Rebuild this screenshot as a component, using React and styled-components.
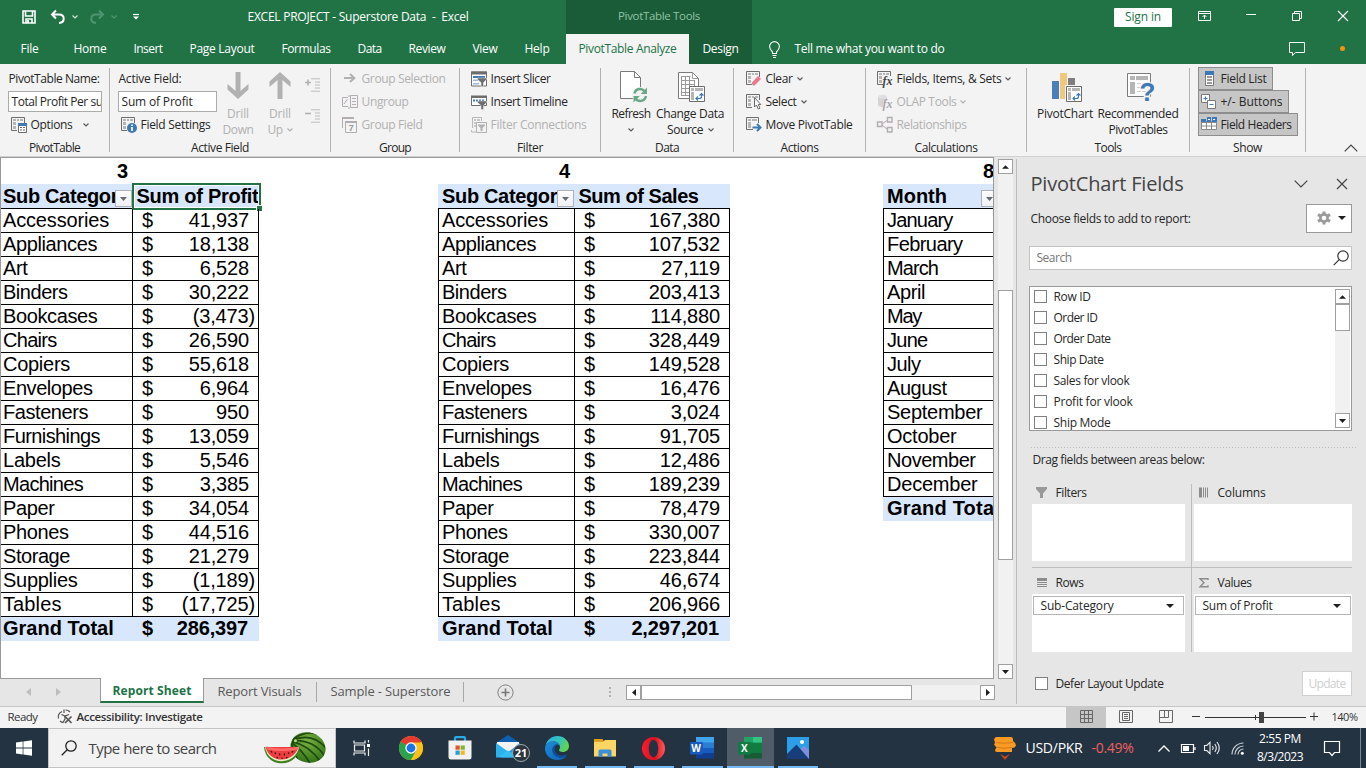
import React, { useLayoutEffect, useRef, useState } from "react";
import styled, { createGlobalStyle, css } from "styled-components";

const Global = createGlobalStyle`
  * { box-sizing: border-box; }
  body { margin: 0; overflow: hidden; }
  svg { display: block; flex: none; overflow: visible; }
`;

const UI = '"Open Sans", "Noto Sans", sans-serif';
const GREEN = "#217346";

/* ---------- text ---------- */

const Txt = styled.span`
  display: inline-block;
  flex: none;
  white-space: pre;
  padding: 0 0.5px;
  font-size: ${(p) => p.$size || 12}px;
  font-weight: ${(p) => p.$weight || 400};
  color: ${(p) => p.$color || "inherit"};
  line-height: 16px;
  margin-left: ${(p) => p.$ml || 0}px;
`;

/* A label whose letter spacing is tuned so that it takes exactly `w` pixels. */
function T({ w, size, weight, color, ml, children }) {
  const ref = useRef(null);
  const [spacing, setSpacing] = useState(0);
  useLayoutEffect(() => {
    const el = ref.current;
    el.style.letterSpacing = "0px";
    const natural = el.getBoundingClientRect().width;
    const next = (w - natural) / el.textContent.length;
    el.style.letterSpacing = `${next}px`;
    setSpacing(next);
  }, [w, children]);
  return (
    <Txt ref={ref} $size={size} $weight={weight} $color={color} $ml={ml} style={{ letterSpacing: spacing }}>
      {children}
    </Txt>
  );
}

/* ---------- frame ---------- */

const Window = styled.div`
  width: 1366px;
  height: 768px;
  display: flex;
  flex-direction: column;
  overflow: hidden;
  background: #e6e6e6;
  color: #262626;
  font-family: ${UI};
`;

const Slot = styled.div`
  display: flex;
  flex: none;
  align-items: center;
  justify-content: ${(p) => (p.$start ? "flex-start" : "center")};
  width: ${(p) => p.$w}px;
  margin-left: ${(p) => p.$ml || 0}px;
`;

const TitleBar = styled.header`
  height: 34px;
  flex: none;
  display: flex;
  align-items: center;
  background: ${GREEN};
  color: #fff;
`;

const QuickAccess = styled.div`
  width: 247px;
  padding-left: 22px;
  display: flex;
  align-items: center;
`;

const ContextTitle = styled.div`
  width: 186px;
  height: 34px;
  margin-left: 97px;
  padding-bottom: 2px;
  display: flex;
  align-items: center;
  justify-content: center;
  background: #1a5c38;
  color: #8fc3a4;
`;

const SignIn = styled.button`
  width: 58px;
  height: 19px;
  margin-left: 362px;
  padding: 0;
  border: 0;
  border-radius: 1px;
  background: #fff;
  color: ${GREEN};
  font-family: inherit;
  display: flex;
  align-items: center;
  justify-content: center;
`;

const TabBar = styled.nav`
  height: 30px;
  flex: none;
  display: flex;
  align-items: center;
  background: ${GREEN};
  color: #fff;
`;

const PlainTabs = styled.div`
  width: 566px;
  padding-left: 20px;
  display: flex;
  gap: 26px;
`;

const ActiveTab = styled.div`
  width: 123px;
  height: 30px;
  display: flex;
  align-items: center;
  justify-content: center;
  background: #f3f3f3;
  color: ${GREEN};
`;

const ContextTab = styled.div`
  width: 63px;
  height: 30px;
  display: flex;
  align-items: center;
  justify-content: center;
  background: #1a5c38;
`;

/* ---------- ribbon ---------- */

const Ribbon = styled.section`
  height: 93px;
  flex: none;
  display: flex;
  background: #f3f3f3;
  border-bottom: 1px solid #d2d2d2;
`;

const Group = styled.div`
  width: ${(p) => p.$w}px;
  height: 92px;
  flex: none;
  display: flex;
  flex-direction: column;
  padding-top: 3px;
  background: linear-gradient(#b1b1b1, #b1b1b1) right 4px / 1px 84px no-repeat;
`;

const GroupBody = styled.div`
  height: 71px;
  flex: none;
  display: flex;
`;

const Caption = styled.div`
  height: 18px;
  padding-top: 2px;
  padding-right: 1px;
  display: flex;
  justify-content: center;
  align-items: center;
`;

const Stack = styled.div`
  width: ${(p) => p.$w || "auto"};
  margin-left: ${(p) => p.$ml || 0}px;
  flex: none;
  display: flex;
  flex-direction: column;
`;

const ExpandStack = styled.div`
  display: flex;
  flex-direction: column;
  gap: 15px;
  padding-top: 11px;
  margin-left: 4px;
`;

const Row = styled.div`
  height: 23px;
  display: flex;
  align-items: center;
  padding-left: ${(p) => p.$pl || 0}px;
  color: ${(p) => (p.$off ? "#b1b1b1" : "#262626")};
`;

const Field = styled.div`
  width: ${(p) => p.$w}px;
  height: 21px;
  margin: 1px 0;
  padding-left: 2px;
  overflow: hidden;
  display: flex;
  align-items: center;
  border: 1px solid #ababab;
  background: #fff;
`;

const Big = styled.div`
  width: ${(p) => p.$w}px;
  margin-left: ${(p) => p.$ml || 0}px;
  flex: none;
  display: flex;
  flex-direction: column;
  align-items: center;
  color: ${(p) => (p.$off ? "#b1b1b1" : "#262626")};
`;

const BigIcon = styled.div`
  height: 38.5px;
  padding-top: ${(p) => p.$pt || 4}px;
  padding-left: ${(p) => p.$pl || 0}px;
`;

const BigLine = styled.div`
  height: 16px;
  display: flex;
  align-items: center;
  gap: 4px;
`;

const Toggle = styled.div`
  width: ${(p) => p.$w}px;
  height: 23px;
  padding-left: 2px;
  display: flex;
  align-items: center;
  border: 1px solid #8d8d8d;
  background: #c6c6c6;
`;

const Chev = ({ c = "#5a5a5a" }) => (
  <svg width="6" height="4" viewBox="0 0 6 4">
    <path d="M.5 .5L3 3L5.500 .5" fill="none" stroke={c} strokeWidth="1.2" />
  </svg>
);

const Ico = ({ children, w = 16, h = 16 }) => (
  <svg width={w} height={h} viewBox={`0 0 ${w} ${h}`} fill="none">
    {children}
  </svg>
);

const PivotBase = ({ c = "#6d6d6d", f = "#b5b5b5" }) => (
  <g>
    <path d="M6 13.500H.5V.5H13.500V6" stroke={c} fill="none" />
    <path d="M2 2h3v2H2zM6 2h2v2H6zM9 2h3v2H9zM2 5h3v3H2zM2 9h3v3H2z" fill={f} />
  </g>
);

const IcoOptions = () => (
  <Ico>
    <PivotBase />
    <path d="M7.500 7.500h8v8h-8z" fill="#fff" stroke="#6d6d6d" />
    <path d="M7 6h9v3H7z" fill="#3e78b5" />
    <path d="M9 10.500h2M12 10.500h2M9 13h2M12 13h2" stroke="#6d6d6d" />
  </Ico>
);
const IcoSettings = () => (
  <Ico>
    <PivotBase />
    <circle cx="11" cy="11" r="5" fill="#3e78b5" />
    <path d="M11 7.500v1.600M11 10v4" stroke="#fff" strokeWidth="1.700" />
  </Ico>
);
const IcoExpand = ({ minus }) => (
  <Ico>
    <path d={minus ? "M0 4.500h6" : "M0 4.500h6M3 1.500v6"} stroke="#b1b1b1" strokeWidth="1.600" />
    <path d="M6 .8h9M10 4h5M10 7h5M10 10h5M6 13.200h9" stroke="#bdbdbd" />
  </Ico>
);
const IcoGroupSel = () => (
  <Ico>
    <path d="M2 7h10M8 3l4.300 4L8 11" stroke="#b1b1b1" strokeWidth="2" />
  </Ico>
);
const IcoUngroup = () => (
  <Ico>
    <path d="M6 12.500H.5v-9H6M2 10L5.500 5M8.500 1.500h7v12h-7zM6 2h2M6 14h2" stroke="#b1adb1" />
    <path d="M10 4.500h4M10 7.500h4M10 10.500h4" stroke="#b1adb1" />
  </Ico>
);
const SevenText = styled.text`
  font: 700 9.500px "Liberation Sans", sans-serif;
`;
const IcoGroupField = () => (
  <Ico>
    <path d="M.5 11V.5h11" stroke="#b1adb1" />
    <path d="M0 0h12v2H0z" fill="#b1adb1" />
    <path d="M3.500 4.500h11v11h-11z" fill="#f3f3f3" stroke="#b1adb1" />
    <path d="M3 4h12v2H3z" fill="#b1adb1" />
    <SevenText x="6.500" y="14" fill="#a09aa0">7</SevenText>
  </Ico>
);
const Funnel = ({ c = "#6d6d6d" }) => <path d="M6.500 7h9v1.500L12.500 11.500v4H10v-4L6.500 8.500z" fill={c} stroke="#f3f3f3" strokeWidth=".5" />;
const IcoSlicer = () => (
  <Ico>
    <path d="M.5 1h15v14H.5z" fill="#fff" stroke="#6d6d6d" />
    <path d="M0 .5h16v3H0z" fill="#6d6d6d" />
    <path d="M2 5h12v2H2z" fill="#3e78b5" />
    <path d="M2 8.500h5v1.500H2zM2 12h6v1.500H2z" fill="#9db9d8" />
    <Funnel />
  </Ico>
);
const IcoTimeline = () => (
  <Ico>
    <path d="M.5 3h15v8.500H.5z" fill="#fff" stroke="#6d6d6d" />
    <path d="M0 1.500h16V4H0z" fill="#6d6d6d" />
    <path d="M2 6.500h12" stroke="#3e78b5" strokeWidth="2" strokeDasharray="2 1" />
    <Funnel />
  </Ico>
);
const IcoConn = () => (
  <Ico>
    <path d="M1.500 11V.5h9V4M.5 13v2H5" stroke="#b8b8b8" />
    <path d="M3 2h2v2H3zM6 2h3v2H6zM3 5h2v2H3zM3 8h2v2H3z" fill="#c6c6c6" />
    <path d="M5.500 5.500h10v10h-10z" fill="#f3f3f3" stroke="#b1b1b1" />
    <path d="M7 7.500h7v1L11.500 11v3h-2v-3L7 8.500z" fill="#b1b1b1" />
  </Ico>
);
const IcoClear = () => (
  <Ico>
    <PivotBase />
    <path d="M4.500 11.500l6-7L15.500 8 9 15H7z" fill="#f3f3f3" />
    <path d="M5.500 12L12 5l3 3-6.500 6.500H7z" fill="#e8798e" />
  </Ico>
);
const IcoSelect = () => (
  <Ico>
    <PivotBase />
    <path d="M8.500 3.500v9.500l2-2 1.800 4 1.700-.8-1.700-3.700h2.500z" fill="#fff" stroke="#5a5a5a" strokeWidth=".9" />
  </Ico>
);
const IcoMove = () => (
  <Ico>
    <path d="M7 12.500H.5V.5H12.500V6" stroke="#6d6d6d" />
    <path d="M2 2h3v2H2zM6 2h5v2H6zM2 5h3v6H2z" fill="#b5b5b5" />
    <path d="M6.500 10.500h7M11 7l3.500 3.500L11 14" stroke="#3e78b5" strokeWidth="2" />
  </Ico>
);
const FxText = styled.text`
  font: italic 700 12px "Liberation Serif", serif;
`;
const IcoFx = () => (
  <Ico>
    <PivotBase />
    <path d="M6 5h10v9.500H6z" fill="#f3f3f3" />
    <FxText x="5.500" y="13.500" fill="#444">fx</FxText>
  </Ico>
);
const IcoOlap = () => (
  <Ico>
    <path d="M1 3v8c0 1.300 2 2 4.500 2H6V7h4V3z" fill="#d6d2d6" />
    <ellipse cx="5.500" cy="2.800" rx="4.500" ry="2" fill="#e2dfe2" />
    <FxText x="5.500" y="14" fill="#aaa5aa">fx</FxText>
  </Ico>
);
const IcoRel = () => (
  <Ico>
    <path d="M.5 5h4.500v4.500H.5zM10.500 .5H15V5h-4.500zM10.500 10.500H15V15h-4.500z" stroke="#b1adb1" strokeWidth="1.400" />
    <path d="M5 7l5-3.500M5 8l5 4" stroke="#b1adb1" />
  </Ico>
);
const MiniPivot = ({ x, y }) => (
  <g transform={`translate(${x} ${y})`}>
    <path d="M.5 .5h15v15H.5z" fill="#fff" stroke="#6d6d6d" />
    <path d="M2 2h3v3H2zM6 2h8v3H6zM2 6h3v8H2z" fill="#b5b5b5" />
    <path d="M7 12.500h3.500c1.500 0 2-1 2-2V8M9 10.500l-2 2 2 2M10.500 9.500l2-2 2 2" stroke="#3e78b5" strokeWidth="1.200" fill="none" />
  </g>
);
const IcoRefresh = () => (
  <Ico w={28} h={32}>
    <path d="M.5 .5h14l6 6v21H.5z" fill="#fff" stroke="#7a7a7a" />
    <path d="M14.500 .5v6h6" stroke="#7a7a7a" />
    <circle cx="20" cy="24" r="8" fill="#f3f3f3" />
    <path d="M14.500 22.500c.7-3 3-4.500 5.500-4.500 2 0 3.500 .8 4.700 2.300M26 25c-.7 3-3 5-5.800 5-2 0-3.700-.9-4.800-2.500" stroke="#6ba889" strokeWidth="2.500" />
    <path d="M27 16.500v6.500h-6.300zM13.500 31.500V25h6.300z" fill="#6ba889" />
  </Ico>
);
const IcoSource = () => (
  <Ico w={28} h={32}>
    <path d="M.5 1.500h14l6 6v20H.5z" fill="#fff" stroke="#7a7a7a" />
    <path d="M14.500 1.500v6h6M3.500 5.500h9M3.500 9.500h13M3.500 13.500h13M3.500 17.500h8M3.500 21.500h8M3.500 24.500h8M3.500 5v20M7.500 5v20M11.500 5v20M16.500 9v6" stroke="#9a9a9a" />
    <MiniPivot x={11} y={15} />
  </Ico>
);
const IcoPivotChart = () => (
  <Ico w={30} h={30}>
    <path d="M0 8h7v18H0z" fill="#4a7fb8" />
    <path d="M8 0h7v26H8z" fill="#efc77d" />
    <path d="M16 5h7v8h-7z" fill="#7f7f7f" />
    <path d="M13 12h17v17H13z" fill="#f3f3f3" />
    <MiniPivot x={14} y={13} />
  </Ico>
);
const QMark = styled.text`
  font: 700 26px "Liberation Sans", sans-serif;
`;
const IcoRecommended = () => (
  <Ico w={28} h={30}>
    <path d="M.5 .5h23v23H.5z" fill="#fff" stroke="#7a7a7a" />
    <path d="M3 3h5v4H3zM9 3h12v4H9zM3 9h5v12H3z" fill="#b5b5b5" />
    <path d="M10 10.500h11M10 14.500h11M10 18.500h11" stroke="#cfcfcf" strokeDasharray="4 1" />
    <QMark x="12.500" y="28" fill="#3e78b5" stroke="#f3f3f3" strokeWidth="2.500" paintOrder="stroke">?</QMark>
  </Ico>
);
const IcoFieldList = () => (
  <Ico w={9} h={16}>
    <path d="M.5 .5h8v14h-8z" fill="#fff" stroke="#7a7a7a" />
    <path d="M0 0h9v4H0z" fill="#3e78b5" />
    <path d="M2 6h5M2 9h5M2 12h5" stroke="#7a7a7a" strokeWidth="1.400" />
  </Ico>
);
const IcoPlusMinus = () => (
  <Ico>
    <path d="M.5 .5h8v8h-8z" fill="#fff" stroke="#7a7a7a" />
    <path d="M2.500 4.500h4M4.500 2.500v4" stroke="#3e78b5" />
    <path d="M6.500 6.500h8v8h-8z" fill="#fff" stroke="#7a7a7a" />
    <path d="M8.500 10.500h4" stroke="#3e78b5" />
  </Ico>
);
const IcoHeaders = () => (
  <Ico>
    <path d="M.5 4.500h15v8H.5z" fill="#fff" stroke="#8a8a8a" />
    <path d="M0 2h5v3H0zM6 0h4v5H6zM11 0h5v5h-5z" fill="#3e78b5" />
    <path d="M.5 5.500h15M0 9h16M5.500 5v8M10.500 5v8" stroke="#8a8a8a" />
    <path d="M7 2.500h2M12 2.500h2" stroke="#fff" />
  </Ico>
);
const DrillArrow = ({ up }) => (
  <Ico w={22} h={27}>
    <g transform={up ? "rotate(180 11 13.500)" : undefined}>
      <path d="M11 0v22" stroke="#b1b1b1" strokeWidth="5" />
      <path d="M.5 12v5.500L11 27l10.500-9.500V12L11 21z" fill="#b1b1b1" />
    </g>
  </Ico>
);

function Cmd({ icon, w, label, off, chev, pl = 0 }) {
  return (
    <Row $off={off} $pl={pl}>
      <Slot $w={19} $start>{icon}</Slot>
      <T w={w}>{label}</T>
      {chev ? <Slot $w={6} $ml={chev}><Chev c={off ? "#b1b1b1" : undefined} /></Slot> : null}
    </Row>
  );
}

function RibbonArea() {
  return (
    <Ribbon>
      <Group $w={110}>
        <GroupBody>
          <Stack $ml={8}>
            <Row><T w={92}>PivotTable Name:</T></Row>
            <Field $w={94}><T w={99}>Total Profit Per sub</T></Field>
            <Cmd pl={3} icon={<IcoOptions />} w={43} label="Options" chev={10} />
          </Stack>
        </GroupBody>
        <Caption><T w={52}>PivotTable</T></Caption>
      </Group>
      <Group $w={221}>
        <GroupBody>
          <Stack $ml={8} $w="99px">
            <Row><T w={64}>Active Field:</T></Row>
            <Field $w={99}><T w={72}>Sum of Profit</T></Field>
            <Cmd pl={3} icon={<IcoSettings />} w={71} label="Field Settings" />
          </Stack>
          <Big $w={40} $ml={1} $off>
            <BigIcon $pt={5}><DrillArrow /></BigIcon>
            <BigLine><T w={23}>Drill</T></BigLine>
            <BigLine><T w={32}>Down</T></BigLine>
          </Big>
          <Big $w={42} $ml={1} $off>
            <BigIcon $pt={5}><DrillArrow up /></BigIcon>
            <BigLine><T w={23}>Drill</T></BigLine>
            <BigLine><T w={16}>Up</T><Chev c="#b1b1b1" /></BigLine>
          </Big>
          <ExpandStack>
            <IcoExpand />
            <IcoExpand minus />
          </ExpandStack>
        </GroupBody>
        <Caption><T w={59}>Active Field</T></Caption>
      </Group>
      <Group $w={129}>
        <GroupBody>
          <Stack $ml={11}>
            <Cmd off icon={<IcoGroupSel />} w={85} label="Group Selection" />
            <Cmd off icon={<IcoUngroup />} w={48} label="Ungroup" />
            <Cmd off icon={<IcoGroupField />} w={62} label="Group Field" />
          </Stack>
        </GroupBody>
        <Caption><T w={33}>Group</T></Caption>
      </Group>
      <Group $w={141}>
        <GroupBody>
          <Stack $ml={11}>
            <Cmd icon={<IcoSlicer />} w={61} label="Insert Slicer" />
            <Cmd icon={<IcoTimeline />} w={78} label="Insert Timeline" />
            <Cmd off icon={<IcoConn />} w={97} label="Filter Connections" />
          </Stack>
        </GroupBody>
        <Caption><T w={27}>Filter</T></Caption>
      </Group>
      <Group $w={133}>
        <GroupBody>
          <Big $w={42} $ml={9}>
            <BigIcon $pl={6}><IcoRefresh /></BigIcon>
            <BigLine><T w={40}>Refresh</T></BigLine>
            <BigLine><Chev /></BigLine>
          </Big>
          <Big $w={72} $ml={2}>
            <BigIcon $pl={4}><IcoSource /></BigIcon>
            <BigLine><T w={69}>Change Data</T></BigLine>
            <BigLine><T w={37}>Source</T><Chev /></BigLine>
          </Big>
        </GroupBody>
        <Caption><T w={25}>Data</T></Caption>
      </Group>
      <Group $w={132}>
        <GroupBody>
          <Stack $ml={12}>
            <Cmd icon={<IcoClear />} w={28} label="Clear" chev={4} />
            <Cmd icon={<IcoSelect />} w={32} label="Select" chev={4} />
            <Cmd icon={<IcoMove />} w={88} label="Move PivotTable" />
          </Stack>
        </GroupBody>
        <Caption><T w={39}>Actions</T></Caption>
      </Group>
      <Group $w={161}>
        <GroupBody>
          <Stack $ml={11}>
            <Cmd icon={<IcoFx />} w={106} label="Fields, Items, & Sets" chev={3} />
            <Cmd off icon={<IcoOlap />} w={61} label="OLAP Tools" chev={3} />
            <Cmd off icon={<IcoRel />} w={71} label="Relationships" />
          </Stack>
        </GroupBody>
        <Caption><T w={64}>Calculations</T></Caption>
      </Group>
      <Group $w={163}>
        <GroupBody>
          <Big $w={58} $ml={9}>
            <BigIcon $pt={6} $pl={3}><IcoPivotChart /></BigIcon>
            <BigLine><T w={57}>PivotChart</T></BigLine>
          </Big>
          <Big $w={84} $ml={2}>
            <BigIcon $pt={6} $pl={5}><IcoRecommended /></BigIcon>
            <BigLine><T w={82}>Recommended</T></BigLine>
            <BigLine><T w={60}>PivotTables</T></BigLine>
          </Big>
        </GroupBody>
        <Caption><T w={28}>Tools</T></Caption>
      </Group>
      <Group $w={116}>
        <GroupBody>
          <Stack $ml={8}>
            <Toggle $w={75}><Slot $w={16}><IcoFieldList /></Slot><T ml={3} w={47}>Field List</T></Toggle>
            <Toggle $w={91}><Slot $w={16}><IcoPlusMinus /></Slot><T ml={3} w={63}>+/- Buttons</T></Toggle>
            <Toggle $w={100}><Slot $w={16}><IcoHeaders /></Slot><T ml={3} w={72}>Field Headers</T></Toggle>
          </Stack>
        </GroupBody>
        <Caption><T w={30}>Show</T></Caption>
      </Group>
      <Collapse>
        <svg width="14" height="8" viewBox="0 0 14 8"><path d="M.7 7.300L7 1l6.300 6.300" fill="none" stroke="#444" strokeWidth="1.200" /></svg>
      </Collapse>
    </Ribbon>
  );
}

const Collapse = styled.div`
  flex: 1;
  display: flex;
  align-items: flex-end;
  justify-content: flex-end;
  padding: 0 8px 4px 0;
`;

/* ---------- worksheet ---------- */

const Work = styled.main`
  height: 549px;
  flex: none;
  display: flex;
`;

const Left = styled.div`
  width: 1016px;
  display: flex;
  flex-direction: column;
`;

const GridRow = styled.div`
  height: 522px;
  display: flex;
`;

const Sheet = styled.div`
  width: 994px;
  height: 522px;
  overflow: hidden;
  display: flex;
  background: #fff;
  border: 1px solid #999;
  color: #000;
  font-family: "Liberation Sans", Arial, sans-serif;
`;

const Pivot = styled.div`
  flex: none;
  width: ${(p) => p.$w}px;
  margin-left: ${(p) => p.$ml || 0}px;
`;

const line = "1px solid #000";

const Line = styled.div`
  display: flex;
  height: ${(p) => (p.$head ? 25 : 24)}px;
  line-height: ${(p) => (p.$head ? 25 : 23)}px;
  font-size: 20px;
  font-weight: ${(p) => (p.$bold ? 700 : 400)};
  background: ${(p) => (p.$bold ? "#d9e7fd" : "transparent")};
  border-bottom: ${(p) => (p.$total ? "0" : line)};
`;

const Num = styled.div`
  width: ${(p) => p.$w}px;
  height: 26px;
  padding: 0 4px 0 0;
  line-height: 27px;
  text-align: right;
  font-size: 20px;
  font-weight: 700;
`;

const Name = styled.div`
  position: relative;
  flex: none;
  width: ${(p) => p.$w}px;
  overflow: hidden;
  white-space: nowrap;
  padding-left: ${(p) => p.$pl}px;
  ${(p) => p.$left && css`border-left: ${line};`}
  ${(p) => p.$right && css`border-right: ${line};`}
`;

const Amount = styled.div`
  position: relative;
  flex: 1;
  display: flex;
  justify-content: space-between;
  padding: 0 ${(p) => (p.$neg ? 3 : p.$right ? 9 : 11)}px 0 9px;
  letter-spacing: -0.15px;
  ${(p) => p.$right && css`border-right: ${line};`}
`;

const HeadText = styled.div`
  position: relative;
  flex: 1;
  padding-left: 3px;
  white-space: nowrap;
`;

const FilterBtn = styled.div`
  position: absolute;
  right: ${(p) => p.$r || 0}px;
  top: 6px;
  width: 17px;
  height: 17px;
  display: flex;
  align-items: center;
  justify-content: center;
  border: 1px solid #aeb2b8;
  background: linear-gradient(#fdfdfe, #eef0f4);
`;

const Selection = styled.div`
  position: absolute;
  left: -1px;
  top: -1px;
  width: 129px;
  height: 27px;
  border: 2px solid ${GREEN};
  box-shadow: inset 0 0 0 1px #fff;
  &::after {
    content: "";
    position: absolute;
    right: -3px;
    bottom: -3px;
    width: 5px;
    height: 5px;
    background: ${GREEN};
    box-shadow: 0 0 0 1px #fff;
  }
`;

const Down = ({ c = "#1f1f1f", w = 7, h = 4 }) => (
  <svg width={w} height={h} viewBox="0 0 8 4" preserveAspectRatio="none"><path d="M0 0h8L4 4z" fill={c} /></svg>
);
const Up = () => <svg width="7" height="4" viewBox="0 0 8 4"><path d="M0 4h8L4 0z" fill="#1f1f1f" /></svg>;

const names = [["Accessories", 107], ["Appliances", 95], ["Art", 25.5], ["Binders", 65.5], ["Bookcases", 95.500], ["Chairs", 54.5], ["Copiers", 68], ["Envelopes", 90.5], ["Fasteners", 86], ["Furnishings", 98], ["Labels", 58.5], ["Machines", 81], ["Paper", 52.5], ["Phones", 66.5], ["Storage", 68], ["Supplies", 75.5], ["Tables", 59.5]];
const profit = ["41,937", "18,138", "6,528", "30,222", "(3,473)", "26,590", "55,618", "6,964", "950", "13,059", "5,546", "3,385", "34,054", "44,516", "21,279", "(1,189)", "(17,725)"];
const sales = ["167,380", "107,532", "27,119", "203,413", "114,880", "328,449", "149,528", "16,476", "3,024", "91,705", "12,486", "189,239", "78,479", "330,007", "223,844", "46,674", "206,966"];
const months = [["January", 66.5], ["February", 76.5], ["March", 52], ["April", 39], ["May", 35], ["June", 41.5], ["July", 34.5], ["August", 60.5], ["September", 96.5], ["October", 70.5], ["November", 89.5], ["December", 91.5]];

function PivotTable({ no, w, ml, col, left, head, headW, values, total, selected }) {
  const pl = left ? 3 : 2;
  return (
    <Pivot $w={w} $ml={ml}>
      <Num $w={col - 1}>{no}</Num>
      <Line $head $bold>
        <Name $w={col} $pl={left ? 3.5 : 1.5}>
          <T size={20} weight={700} w={127}>Sub Category</T>
          <FilterBtn $r={1}><Down c="#666b73" /></FilterBtn>
        </Name>
        <HeadText>
          <T size={20} weight={700} w={headW}>{head}</T>
          {selected && <Selection />}
        </HeadText>
      </Line>
      {names.map(([n, nw], i) => (
        <Line key={n}>
          <Name $w={col} $pl={pl - 0.5} $left={left} $right><T size={20} w={nw}>{n}</T></Name>
          <Amount $right $neg={values[i][0] === "("}><span>$</span><span>{values[i]}</span></Amount>
        </Line>
      ))}
      <Line $bold $total>
        <Name $w={col} $pl={left ? 4 : 2}>Grand Total</Name>
        <Amount><span>$</span><span>{total}</span></Amount>
      </Line>
    </Pivot>
  );
}

function MonthTable() {
  return (
    <Pivot $w={116} $ml={153}>
      <Num $w={115}>8</Num>
      <Line $head $bold>
        <Name $w={116} $pl={4}>Month<FilterBtn $r={1}><Down c="#666b73" /></FilterBtn></Name>
      </Line>
      {months.map(([m, mw]) => <Line key={m}><Name $w={116} $pl={2.5} $left><T size={20} w={mw}>{m}</T></Name></Line>)}
      <Line $bold $total><Name $w={116} $pl={3.5}><T size={20} weight={700} w={114}>Grand Total</T></Name></Line>
    </Pivot>
  );
}

/* ---------- scroll bars ---------- */

const VScroll = styled.div`
  width: 15px;
  height: ${(p) => p.$h}px;
  margin: ${(p) => p.$m};
  flex: none;
  display: flex;
  flex-direction: column;
  background: #f1f1f1;
`;
const HScroll = styled.div`
  width: 369px;
  height: 15px;
  display: flex;
  background: #f1f1f1;
`;
const ScrollBtn = styled.div`
  width: 15px;
  height: 15px;
  flex: none;
  display: flex;
  align-items: center;
  justify-content: center;
  border: 1px solid #a0a0a0;
  background: #fff;
`;
const Thumb = styled.div`
  width: ${(p) => p.$w || 15}px;
  height: ${(p) => p.$h || 15}px;
  margin-top: ${(p) => p.$mt || 0}px;
  border: 1px solid #a0a0a0;
  background: #fff;
`;
const Fill = styled.div`
  flex: 1;
`;

/* ---------- sheet tabs ---------- */

const SheetTabs = styled.div`
  height: 27px;
  padding-bottom: 1px;
  display: flex;
  align-items: center;
  color: #595959;
`;
const ActiveSheet = styled.div`
  width: 104px;
  height: 25px;
  margin-top: -3px;
  padding-top: 3px;
  align-self: flex-start;
  position: relative;
  top: 2px;
  display: flex;
  align-items: center;
  justify-content: center;
  background: #fff;
  border: 1px solid #999;
  border-top: 0;
  border-bottom: 2px solid ${GREEN};
  color: ${GREEN};
`;
const SheetLabel = styled.div`
  padding-bottom: 2px;
  margin-left: 13px;
  display: flex;
`;
const Divider = styled.div`
  width: 1px;
  height: 20px;
  margin: 0 0 0 ${(p) => p.$ml}px;
  background: #a8a8a8;
`;

/* ---------- fields pane ---------- */

const Pane = styled.aside`
  width: 350px;
  height: 545px;
  margin-top: 2px;
  padding-left: 12px;
  display: flex;
  flex-direction: column;
  align-items: flex-start;
  border-left: 1px solid #bebebe;
`;
const PaneTitle = styled.div`
  height: 45px;
  padding: 4px 0 0 1px;
  flex: none;
  display: flex;
  align-items: center;
`;
const PaneLine = styled.div`
  width: 323px;
  height: 29px;
  flex: none;
  display: flex;
  align-items: center;
  justify-content: space-between;
`;
const GearBtn = styled.div`
  width: 46px;
  height: 29px;
  padding: 0 5px 2px 10px;
  display: flex;
  align-items: center;
  justify-content: space-between;
  border: 1px solid #999;
  background: #fff;
`;
const Search = styled.div`
  width: 323px;
  height: 24px;
  margin-top: 13px;
  padding: 0 2px 1px 6px;
  flex: none;
  display: flex;
  align-items: center;
  justify-content: space-between;
  border: 1px solid #c3c3c3;
  background: #fff;
  color: #777;
`;
const List = styled.div`
  width: 323px;
  height: 145px;
  margin-top: 16px;
  flex: none;
  display: flex;
  justify-content: space-between;
  overflow: hidden;
  border: 1px solid #999;
  background: #fff;
`;
const Items = styled.div`
  margin-top: -1px;
`;
const ListItem = styled.div`
  height: 21px;
  padding-left: 4px;
  display: flex;
  align-items: center;
`;
const Check = styled.div`
  width: 13px;
  height: 13px;
  margin-right: ${(p) => p.$mr || 6}px;
  border: 1px solid #808080;
  background: #fff;
`;
const Dots = styled.div`
  width: 326px;
  height: 1px;
  flex: none;
  margin: 16px 0 4px 2px;
  background: repeating-linear-gradient(90deg, #bdbdbd 0 1px, transparent 1px 3px);
`;
const Areas = styled.div`
  width: 320px;
  margin: 16px 0 0 3px;
  display: grid;
  grid-template-columns: 159px 1px 160px;
  grid-template-rows: 83px 1px 84px;
  background:
    linear-gradient(#bebebe, #bebebe) 159px 0 / 1px 100% no-repeat,
    linear-gradient(#bebebe, #bebebe) 0 83px / 100% 1px no-repeat;
`;
const Area = styled.div`
  grid-column: ${(p) => p.$c};
  grid-row: ${(p) => p.$r};
  padding-left: ${(p) => (p.$c === 3 ? 2 : 0)}px;
`;
const AreaHead = styled.div`
  height: ${(p) => p.$h}px;
  padding: ${(p) => (p.$h === 20 ? 0 : 5)}px 0 ${(p) => (p.$h === 20 ? 3 : 2)}px 4px;
  display: flex;
  align-items: center;
`;
const AreaBox = styled.div`
  width: ${(p) => p.$w}px;
  height: ${(p) => p.$h}px;
  padding: 2px 1px;
  background: #fff;
`;
const Chip = styled.div`
  height: 19px;
  padding: 0 9px 0 6px;
  display: flex;
  align-items: center;
  justify-content: space-between;
  border: 1px solid #b5b5b5;
`;
const PaneFooter = styled.div`
  width: 323px;
  margin-top: 19px;
  padding-left: 6px;
  display: flex;
  align-items: center;
`;
const UpdateBtn = styled.div`
  width: 50px;
  height: 25px;
  margin-left: auto;
  display: flex;
  align-items: center;
  justify-content: center;
  border: 1px solid #d0d0d0;
  background: #fff;
  color: #cfcfcf;
`;

const fields = [["Row ID", 38], ["Order ID", 45], ["Order Date", 58], ["Ship Date", 51], ["Sales for vlook", 77], ["Profit for vlook", 80], ["Ship Mode", 58]];

const Gear = () => (
  <svg width="14" height="14" viewBox="0 0 14 14">
    <circle cx="7" cy="7" r="3.600" fill="none" stroke="#9a9a9a" strokeWidth="2.600" />
    <path d="M5.500 .5h3V3h-3zM5.500 11h3v2.500h-3zM1.700 2.300l2.500 1.400-1.500 2.600L.2 4.900zM12.300 2.300L9.800 3.700l1.500 2.600 2.500-1.400zM.2 9.100l2.500-1.400 1.500 2.600-2.500 1.400zM13.800 9.100l-2.500-1.400-1.500 2.600 2.500 1.400z" fill="#9a9a9a" />
  </svg>
);

const Mag = ({ size = 16, c = "#333", sw = 1.2 }) => (
  <svg width={size} height={size} viewBox="0 0 16 16">
    <circle cx="10" cy="6" r="5.200" fill="none" stroke={c} strokeWidth={sw} />
    <path d="M6.200 9.700L.7 15.200" stroke={c} strokeWidth={sw} />
  </svg>
);

function FieldsPane() {
  return (
    <Pane>
      <PaneTitle>
        <T size={20} w={154} color="#444">PivotChart Fields</T>
        <Slot $w={14} $ml={110}>
          <svg width="14" height="8" viewBox="0 0 14 8"><path d="M.7 .7L7 7L13.300 .7" fill="none" stroke="#444" strokeWidth="1.200" /></svg>
        </Slot>
        <Slot $w={10} $ml={29}>
          <svg width="10" height="10" viewBox="0 0 10 10"><path d="M0 0l10 10M10 0L0 10" stroke="#444" strokeWidth="1.200" /></svg>
        </Slot>
      </PaneTitle>
      <PaneLine>
        <T ml={1} w={161}>Choose fields to add to report:</T>
        <GearBtn><Gear /><Down w={8} /></GearBtn>
      </PaneLine>
      <Search><T w={36}>Search</T><Mag /></Search>
      <List>
        <Items>
          {fields.map(([f, w]) => <ListItem key={f}><Check /><T w={w}>{f}</T></ListItem>)}
        </Items>
        <VScroll $h={139} $m="2px 1px 0 0">
          <ScrollBtn><Up /></ScrollBtn>
          <Thumb $h={27} />
          <Fill />
          <ScrollBtn><Down /></ScrollBtn>
        </VScroll>
      </List>
      <Dots />
      <T ml={3} w={173}>Drag fields between areas below:</T>
      <Areas>
        <Area $c={1} $r={1}>
          <AreaHead $h={20}>
            <Slot $w={19} $start><Ico w={11} h={12}><path d="M0 0h11v2L7 6.500V11H4V6.500L0 2z" fill="#999" /></Ico></Slot>
            <T w={32}>Filters</T>
          </AreaHead>
          <AreaBox $w={153} $h={57} />
        </Area>
        <Area $c={3} $r={1}>
          <AreaHead $h={20}>
            <Slot $w={19} $start><Ico w={11} h={11}><path d="M1 .5h3v10H1zM5 .5h1v10H5zM7 .5h1v10H7zM9 .5h1v10H9z" fill="#8c8c8c" /></Ico></Slot>
            <T w={49}>Columns</T>
          </AreaHead>
          <AreaBox $w={158} $h={57} />
        </Area>
        <Area $c={1} $r={3}>
          <AreaHead $h={26}>
            <Slot $w={19} $start><Ico w={11} h={10}><path d="M1 0h10v3H1zM1 4h10v1H1zM1 6h10v1H1zM1 8h10v1H1z" fill="#8c8c8c" /></Ico></Slot>
            <T w={29}>Rows</T>
          </AreaHead>
          <AreaBox $w={153} $h={58}><Chip><T w={74}>Sub-Category</T><Down w={8} /></Chip></AreaBox>
        </Area>
        <Area $c={3} $r={3}>
          <AreaHead $h={26}>
            <Slot $w={19} $start><Ico w={11} h={10}><path d="M10 2V.7H2l4 4-4 4h8V7.300" stroke="#8c8c8c" strokeWidth="1.400" /></Ico></Slot>
            <T w={35}>Values</T>
          </AreaHead>
          <AreaBox $w={158} $h={58}><Chip><T w={71}>Sum of Profit</T><Down w={8} /></Chip></AreaBox>
        </Area>
      </Areas>
      <PaneFooter>
        <Check $mr={7} /><T w={109}>Defer Layout Update</T>
        <UpdateBtn><T w={38}>Update</T></UpdateBtn>
      </PaneFooter>
    </Pane>
  );
}

/* ---------- status bar ---------- */

const Status = styled.footer`
  height: 22px;
  flex: none;
  padding: 0 0 1px 7px;
  display: flex;
  align-items: center;
  background: #f3f3f3;
  border-top: 1px solid #c6c6c6;
  color: #333;
`;
const ViewBtn = styled.div`
  width: 40px;
  height: 21px;
  margin-bottom: -1px;
  padding-bottom: 2px;
  display: flex;
  align-items: center;
  justify-content: center;
  background: ${(p) => (p.$on ? "#c6c6c6" : "transparent")};
`;

function StatusBar() {
  return (
    <Status>
      <T size={11.5} w={31}>Ready</T>
      <Slot $w={16} $ml={19}>
        <Ico>
          <path d="M5 2.500C2 4 .8 7 1.500 9.500M3 12c1 1 2 1.500 3.500 1.700M7 .5V4M4.500 5.500L8 7l4-1.500M8 7v3l-2 3.500M8.500 1c2 0 3.500 .8 4.500 2" stroke="#555" strokeWidth="1.200" />
          <path d="M7.500 7l7 7M14.500 7.500l-6.500 6.500" stroke="#555" strokeWidth="1.700" />
        </Ico>
      </Slot>
      <T size={11.5} weight={600} w={127} ml={3}>Accessibility: Investigate</T>
      <Slot $w={863} />
      <ViewBtn $on><Ico w={13} h={13}><path d="M.5 .5h12v12H.5zM4.500 .5v12M8.500 .5v12M.5 4.500h12M.5 8.500h12" stroke="#666" /></Ico></ViewBtn>
      <ViewBtn><Ico w={14} h={13}><path d="M.5 .5h13v12H.5zM3.500 2.500h7v8h-7zM5 4.500h4M5 6.500h4M5 8.500h4" stroke="#666" /></Ico></ViewBtn>
      <ViewBtn><Ico w={14} h={13}><path d="M.5 .5h13v12H.5zM5.500 .5v7M9.500 .5v7M.5 7.500h9" stroke="#666" /></Ico></ViewBtn>
      <Slot $w={132} $ml={5}>
        <svg width="132" height="14" viewBox="0 0 132 14">
          <path d="M1 6.500h8M14 7.500h101M119 6.500h8M123 2.500v8M64.500 5v5" stroke="#333" fill="none" />
          <path d="M68 2h5v11h-5z" fill="#444" />
        </svg>
      </Slot>
      <T size={11} w={27} ml={8}>140%</T>
    </Status>
  );
}

/* ---------- task bar ---------- */

const Taskbar = styled.footer`
  height: 40px;
  flex: none;
  display: flex;
  align-items: center;
  background: #233342;
  color: #fff;
`;
const SearchBox = styled.div`
  width: 288px;
  height: 40px;
  padding: 0 9px 0 12px;
  display: flex;
  align-items: center;
  background: #f2f2f2;
  border: 1px solid #c4c4c4;
  color: #444;
`;
const App48 = styled.div`
  position: relative;
  width: ${(p) => p.$w || 48.5}px;
  height: 40px;
  flex: none;
  display: flex;
  align-items: center;
  justify-content: center;
  background: ${(p) => (p.$on ? "#505c68" : "transparent")};
  &::after {
    content: "";
    position: absolute;
    bottom: 0;
    left: ${(p) => (p.$on ? 0 : 4)}px;
    right: ${(p) => (p.$on ? 0 : 4)}px;
    height: 2px;
    background: ${(p) => (p.$run || p.$on ? "#76b9f5" : "transparent")};
  }
`;
const Clock = styled.div`
  width: 60px;
  margin-left: 2px;
  display: flex;
  flex-direction: column;
  align-items: center;
  gap: 2px;
`;
const Edge = styled.div`
  width: 1px;
  height: 40px;
  margin-left: 20px;
  background: #7d8791;
`;
const LogoText = styled.text`
  font: 700 ${(p) => p.$s || 10}px ${UI};
`;

const Melon = () => (
  <svg width="62" height="32" viewBox="0 0 62 32">
    <defs>
      <radialGradient id="rind" cx=".4" cy=".3" r=".8"><stop offset="0" stopColor="#7db043" /><stop offset=".6" stopColor="#4a8a25" /><stop offset="1" stopColor="#2f6a18" /></radialGradient>
      <clipPath id="mc"><ellipse cx="44" cy="15.500" rx="17.500" ry="15" /></clipPath>
    </defs>
    <g transform="rotate(18 44 15.500)">
      <ellipse cx="44" cy="15.500" rx="17.800" ry="15" fill="url(#rind)" />
      <g clipPath="url(#mc)" fill="none" stroke="#1d4a10" strokeWidth="1.700">
        <path d="M27 12Q44-8 62 5M27 13Q44-1 62 11M27 14Q46 6 62 18M27 15Q44 13 60 25M27 16Q40 20 52 31M27 17q6 8 12 15" />
      </g>
      <circle cx="30" cy="13" r="1.500" fill="#b9cf7a" />
    </g>
    <path d="M0 15C1 25 8 31.500 18 31.300 28 31 35 24 36 15z" fill="#3f7f22" />
    <path d="M1 15C2.500 24 9 29.300 18 29.200 27 29 33.500 23 35 15z" fill="#e9efc6" />
    <path d="M1.500 15C3.500 23 10 27.700 18 27.600 26 27.400 32.500 22 34.500 15z" fill="#ee3d3f" />
    <path d="M2 14.500q16 4 33 0l-1 3q-16 3-31 0z" fill="#ff6a66" />
    <path d="M7 19l1 1.500M11 20.500l.7 1.500M15.500 21.500l.3 1.800M20.500 21.500l-.3 1.800M25 20.500l-.7 1.500M29 19l-1 1.500M13 25l.5 1.200M18 25.500v1.200M23 25l-.5 1.200" stroke="#301010" strokeWidth="1.300" />
  </svg>
);

const Chrome = () => (
  <svg width="24" height="24" viewBox="0 0 24 24">
    <circle cx="12" cy="12" r="12" fill="#fbc116" />
    <path d="M12 12L1.600 6A12 12 0 0 1 22.400 6z" fill="#e33b2e" />
    <path d="M12 6h10.400A12 12 0 0 0 12 0z" fill="#e33b2e" />
    <path d="M1.600 6A12 12 0 0 0 12 24l5.200-9L12 12z" fill="#2ba24c" />
    <path d="M1.600 6L7 15l5-3z" fill="#2ba24c" />
    <path d="M12 6.500h10.700A12 12 0 0 1 12 24l5-9z" fill="#fbc116" />
    <circle cx="12" cy="12" r="5.700" fill="#fff" />
    <circle cx="12" cy="12" r="4.400" fill="#1a73e8" />
  </svg>
);

const Store = () => (
  <svg width="24" height="24" viewBox="0 0 24 24">
    <path d="M7 6V2.200Q7 1.200 8 1.200h8q1 0 1 1V6" fill="none" stroke="#29a9e6" strokeWidth="2.200" />
    <path d="M.5 4.500h23V21q0 2.500-2.500 2.500H3Q.5 23.500 .5 21z" fill="#f1f1f1" />
    <path d="M7.500 9.500h4.200v4.200H7.500z" fill="#e8502b" /><path d="M12.600 9.500h4.200v4.200h-4.200z" fill="#7db72f" />
    <path d="M7.500 14.600h4.200v4.200H7.500z" fill="#1f9fe0" /><path d="M12.600 14.600h4.200v4.200h-4.200z" fill="#f7b51c" />
  </svg>
);

const Mail = () => (
  <svg width="34" height="27" viewBox="0 0 34 27">
    <path d="M0 8L12 0l12 8v4H0z" fill="#0f5fb0" />
    <path d="M1 7h22v6l-11 7-11-7z" fill="#f4f4f4" />
    <path d="M0 8l12 8.500L0 22.500z" fill="#2bb1ee" />
    <path d="M24 8L5 22.500h19z" fill="#1c96e0" />
    <path d="M0 22.500L12 15.500l12 7z" fill="#35bcf3" />
    <circle cx="25" cy="18" r="8.500" fill="#2b3640" stroke="#a0a7ad" />
    <LogoText $s={11} x="18.800" y="22" fill="#fff" textLength="12.500">21</LogoText>
  </svg>
);

const EdgeLogo = () => (
  <svg width="24" height="24" viewBox="0 0 24 24">
    <defs>
      <linearGradient id="e1" x1="0" x2="1" y1="0" y2=".4"><stop offset="0" stopColor="#2aa9e8" /><stop offset=".6" stopColor="#33c3c0" /><stop offset="1" stopColor="#5fd550" /></linearGradient>
      <linearGradient id="e2" x1="0" x2="1" y1="0" y2="1"><stop offset="0" stopColor="#1d8ddb" /><stop offset="1" stopColor="#0f62b5" /></linearGradient>
    </defs>
    <path d="M.5 9.500C2 4 6.500 0 12.300 0 19 0 24 5 24 10c0 3.700-2.700 6-6.300 6-2.700 0-3.700-1-3.700-1.700 0-.9 1-1.400 1-3.300C15 8 12 5.500 8.500 5.500 5 5.500 1.800 7.500 .5 9.500z" fill="url(#e1)" />
    <path d="M.3 10C2 7.500 5 5.500 8.500 5.500c3.500 0 6.500 2.500 6.500 5.500-.5-2-2-2.500-3-2.500-2.500 0-4.500 2.500-4.500 5.500 0 5 4.500 7.500 8.500 7.500 2.500 0 4.500-1 5.500-1.500C19.500 22.500 16 24 12 24 5.500 24 0 19 0 12.500z" fill="url(#e2)" />
    <path d="M7.500 14c0 5 4.500 7.500 8.500 7.500 2.500 0 4.500-1 5.500-1.500 .7-1 .3-1.500-.5-1.200C15 21 9.500 18 9.800 13c.1-2 1-3.500 2.200-4.500-2.500 0-4.500 2.500-4.500 5.500z" fill="#0c4f9e" />
  </svg>
);

const Folder = () => (
  <svg width="22" height="20" viewBox="0 0 22 20">
    <path d="M0 1h8.500l2 3H0z" fill="#dfa01c" />
    <path d="M0 4h9l2-2h11v16.500H0z" fill="#fbd565" />
    <path d="M4.500 19v-6q0-1.500 1.500-1.500h10q1.500 0 1.500 1.500v6h-4v-3.500h-5V19z" fill="#3c8fd9" />
  </svg>
);

const Opera = () => (
  <svg width="23" height="23" viewBox="0 0 23 23">
    <defs><linearGradient id="op" x1="0" x2="1"><stop offset="0" stopColor="#ff1b2d" /><stop offset=".55" stopColor="#d8101f" /><stop offset="1" stopColor="#ff5a5a" /></linearGradient></defs>
    <path fillRule="evenodd" d="M11.500 0a11.500 11.500 0 1 0 0 23 11.500 11.500 0 0 0 0-23zm0 2.800c2.700 0 4.700 3.800 4.700 8.700s-2 8.700-4.700 8.700-4.700-3.800-4.700-8.700 2-8.700 4.700-8.700z" fill="url(#op)" />
  </svg>
);

const Office = ({ colors, box, letter }) => (
  <svg width="24" height="22" viewBox="0 0 24 22">
    <path d="M6 0h18v6H6z" fill={colors[0]} /><path d="M6 5.500h18V11H6z" fill={colors[1]} />
    <path d="M6 11h18v5.500H6z" fill={colors[2]} /><path d="M6 16h18v5.500H6z" fill={colors[3]} />
    {letter === "X" && <path d="M15 0h9v5.500h-9z" fill="#33c481" />}
    <rect x="0" y="5" width="13" height="12.500" rx="1" fill={box} />
    <LogoText x={letter === "W" ? 1.2 : 3} y="15" fill="#fff">{letter}</LogoText>
  </svg>
);

const Photos = () => (
  <svg width="22" height="22" viewBox="0 0 22 22">
    <path d="M0 0h22v22H0z" fill="#2c9fe8" />
    <path d="M10 15l7-6 5 4v9H10z" fill="#7f8fe0" />
    <path d="M0 17l9.500-9.500L22 22H0z" fill="#173e78" />
    <circle cx="15" cy="5" r="2" fill="#fff" />
  </svg>
);

function TaskBarArea() {
  return (
    <Taskbar>
      <Slot $w={48}>
        <svg width="16" height="16" viewBox="0 0 16 16"><path d="M0 2.400L6.700 1.500v6.100H0zM7.400 1.400L16 .2v7.400H7.400zM0 8.400h6.700v6.100L0 13.600zM7.400 8.400H16v7.400l-8.600-1.200z" fill="#fff" /></svg>
      </Slot>
      <SearchBox>
        <Mag c="#222" sw={1.3} />
        <T size={15} w={129} ml={11}>Type here to search</T>
        <Slot $w={62} $ml={47}><Melon /></Slot>
      </SearchBox>
      <App48 $w={51}>
        <svg width="16" height="16" viewBox="0 0 16 16"><path d="M0 .5v2.500h11V.5M.5 5h10v6H.5zM0 15.500V13h11v2.500M14.500 0v2.500M14.500 8.500V16" fill="none" stroke="#eee" strokeWidth="1.200" /><path d="M13 4h3v3h-3z" fill="#fff" /></svg>
      </App48>
      <App48><Chrome /></App48>
      <App48><Store /></App48>
      <App48><Slot $w={34} $ml={10}><Mail /></Slot></App48>
      <App48 $run $w={48.5}><EdgeLogo /></App48>
      <App48 $run><Folder /></App48>
      <App48 $run><Opera /></App48>
      <App48 $run><Office letter="W" box="#185abd" colors={["#41a5ee", "#2b7cd3", "#185abd", "#103f91"]} /></App48>
      <App48 $on $w={47.5}><Office letter="X" box="#107c41" colors={["#21a366", "#107c41", "#107c41", "#185c37"]} /></App48>
      <App48 $run $w={48}><Photos /></App48>
      <Slot $w={22} $ml={172}>
        <svg width="22" height="23" viewBox="0 0 22 23">
          <path d="M2 0h15q2 0 2 3v1q3 2 3 4.500Q21 11 18 11v4H3q-2 0-2-2l1.500-2.500L0 7.500 1 6 0 2z" fill="#f89b24" />
          <path d="M2 5.500q8 1.500 17 0M3 10.500q7 1.500 15 0" stroke="#d77712" strokeWidth="1" fill="none" />
          <path d="M6 17l5 2.500 5-2.500-5 6z" fill="#c9451d" />
        </svg>
      </Slot>
      <T size={14} w={58} ml={9}>USD/PKR</T>
      <T size={14} w={43} ml={8} color="#f2605d">-0.49%</T>
      <Slot $w={12} $ml={24}><svg width="12" height="7" viewBox="0 0 12 7"><path d="M.5 6.500L6 1l5.500 5.500" fill="none" stroke="#fff" strokeWidth="1.300" /></svg></Slot>
      <Slot $w={15} $ml={11}><svg width="15" height="9" viewBox="0 0 15 9"><path d="M.5 .5h12v8H.5zM14 3v3" fill="none" stroke="#fff" strokeWidth="1.200" /><path d="M2 2h6v5H2z" fill="#fff" /></svg></Slot>
      <Slot $w={16} $ml={8}><svg width="16" height="14" viewBox="0 0 16 14"><path d="M.5 4.500h2.300L6 1.300v11.400L2.800 9.500H.5zM8.500 5q1.500 2 0 4M10.800 3q3 4 0 8M13 1q4.500 6 0 12" fill="none" stroke="#eee" strokeWidth="1.100" /></svg></Slot>
      <Slot $w={13} $ml={11}><svg width="13" height="13" viewBox="0 0 13 13"><path d="M1 12.500A11.500 11.500 0 0 1 12.500 1M4 12.500A8.500 8.500 0 0 1 12.500 4M7 12.500A5.500 5.500 0 0 1 12.500 7" fill="none" stroke="#c8ced4" strokeWidth="1.200" /><circle cx="11.300" cy="11.300" r="1.500" fill="#fff" /></svg></Slot>
      <Slot $w={70}>
        <Clock>
          <T size={12} w={43}>2:55 PM</T>
          <T size={12} w={47}>8/3/2023</T>
        </Clock>
      </Slot>
      <Slot $w={16} $ml={10}><svg width="16" height="17" viewBox="0 0 16 17"><path d="M.5 1.500h15v11h-5L8 15.500l-2.500-3h-5z" fill="none" stroke="#fff" strokeWidth="1.200" /></svg></Slot>
      <Edge />
    </Taskbar>
  );
}

/* ---------- page ---------- */

export default function App() {
  return (
    <Window>
      <Global />
      <TitleBar>
        <QuickAccess>
          <Ico w={14} h={14}><path d="M1 1h12v12H1zM3.500 1v5h7V1M4 13V9h6v4" stroke="#fff" strokeWidth="1.600" /><path d="M5 10h2v3H5z" fill="#fff" /></Ico>
          <Slot $w={14} $ml={15}><Ico w={14} h={14}><path d="M5 .5L1 4.500l4 4M1.500 4.500H8c6 0 6.500 8 0 8.500" stroke="#fff" strokeWidth="2" /></Ico></Slot>
          <Slot $w={6} $ml={7}><Chev c="#cfe3d7" /></Slot>
          <Slot $w={14} $ml={12}><Ico w={14} h={14}><path d="M9 .5l4 4-4 4M12.500 4.500H6c-6 0-6.500 8 0 8.500" stroke="#4f9470" strokeWidth="2" /></Ico></Slot>
          <Slot $w={6} $ml={7}><Chev c="#4f9470" /></Slot>
          <Slot $w={6} $ml={16}><Ico w={6} h={6}><path d="M0 .5h6" stroke="#fff" strokeWidth="1.200" /><path d="M0 2.500h6L3 5.500z" fill="#fff" /></Ico></Slot>
        </QuickAccess>
        <T w={222}>{"EXCEL PROJECT - Superstore Data  -  Excel"}</T>
        <ContextTitle><T size={11.5} w={83}>PivotTable Tools</T></ContextTitle>
        <SignIn><T w={37}>Sign in</T></SignIn>
        <Slot $w={13} $ml={26}><Ico w={13} h={14}><path d="M.5 1.500h12v9H.5zM.5 3.500h12M6.500 9V5M4.500 7l2-2 2 2" stroke="#fff" /></Ico></Slot>
        <Slot $w={10} $ml={35}><Ico w={10} h={6}><path d="M0 .5h10" stroke="#fff" /></Ico></Slot>
        <Slot $w={10} $ml={36}><Ico w={10} h={14}><path d="M.5 3.500h7v7h-7zM2.500 3V1.500h7v7H8" stroke="#fff" /></Ico></Slot>
        <Slot $w={10} $ml={36}><Ico w={10} h={13}><path d="M0 0l10 10M10 0L0 10" stroke="#fff" strokeWidth="1.100" /></Ico></Slot>
      </TitleBar>
      <TabBar>
        <PlainTabs>
          <T w={19}>File</T>
          <T w={34} ml={8}>Home</T>
          <T w={30}>Insert</T>
          <T w={66}>Page Layout</T>
          <T w={50}>Formulas</T>
          <T w={25}>Data</T>
          <T w={38}>Review</T>
          <T w={26}>View</T>
          <T w={26}>Help</T>
        </PlainTabs>
        <ActiveTab><T w={99}>PivotTable Analyze</T></ActiveTab>
        <ContextTab><T w={37}>Design</T></ContextTab>
        <Slot $w={11} $ml={17}><Ico w={11} h={17}><path d="M3.500 12.500V11C2 9.500 .6 8 .6 5.500a4.900 4.900 0 0 1 9.800 0C10.400 8 9 9.500 7.500 11v1.500zM3.500 14.500h4M4 16.500h3" stroke="#fff" strokeWidth="1.100" /></Ico></Slot>
        <T w={151} ml={14}>Tell me what you want to do</T>
        <Slot $w={16} $ml={344}><Ico w={16} h={14}><path d="M.5 .5h15v10H6.500L3.500 13.500v-3h-3z" stroke="#fff" /></Ico></Slot>
        <Slot $w={5} $ml={35}><Ico w={5} h={7}><circle cx="2.500" cy="2.500" r="2.500" fill="#f7940a" /></Ico></Slot>
      </TabBar>
      <RibbonArea />
      <Work>
        <Left>
          <GridRow>
            <Sheet>
              <PivotTable no="3" w={258} col={132} head="Sum of Profit" headW={123} values={profit} total="286,397" selected />
              <PivotTable no="4" ml={179} w={292} col={137} left head="Sum of Sales" headW={121} values={sales} total="2,297,201" />
              <MonthTable />
            </Sheet>
            <VScroll $h={520} $m="2px 0 0 4px">
              <ScrollBtn><Up /></ScrollBtn>
              <Thumb $h={270} $mt={116} />
              <Fill />
              <ScrollBtn><Down /></ScrollBtn>
            </VScroll>
          </GridRow>
          <SheetTabs>
            <Slot $w={5} $ml={26}><Ico w={5} h={8}><path d="M5 0v8L0 4z" fill="#bdbdbd" /></Ico></Slot>
            <Slot $w={5} $ml={25}><Ico w={5} h={8}><path d="M0 0v8l5-4z" fill="#bdbdbd" /></Ico></Slot>
            <Slot $w={39} />
            <ActiveSheet><T w={80} weight={700}>Report Sheet</T></ActiveSheet>
            <SheetLabel><T size={13} w={85}>Report Visuals</T></SheetLabel>
            <Divider $ml={14} />
            <SheetLabel><T size={13} w={121}>Sample - Superstore</T></SheetLabel>
            <Divider $ml={12} />
            <Slot $w={17} $ml={33}><Ico w={17} h={17}><circle cx="8.500" cy="8.500" r="7.600" stroke="#808080" /><path d="M4.500 8.500h8M8.500 4.500v8" stroke="#777" strokeWidth="1.600" /></Ico></Slot>
            <Slot $w={2} $ml={95}><Ico w={2} h={11}><path d="M0 0h2v2H0zM0 4h2v2H0zM0 8h2v2H0z" fill="#b0b0b0" /></Ico></Slot>
            <Slot $w={369} $ml={15}>
              <HScroll>
                <ScrollBtn><Ico w={4} h={7}><path d="M4 0v7L0 3.500z" fill="#1f1f1f" /></Ico></ScrollBtn>
                <Thumb $w={271} />
                <Fill />
                <ScrollBtn><Ico w={4} h={7}><path d="M0 0v7l4-3.500z" fill="#1f1f1f" /></Ico></ScrollBtn>
              </HScroll>
            </Slot>
          </SheetTabs>
        </Left>
        <FieldsPane />
      </Work>
      <StatusBar />
      <TaskBarArea />
    </Window>
  );
}
